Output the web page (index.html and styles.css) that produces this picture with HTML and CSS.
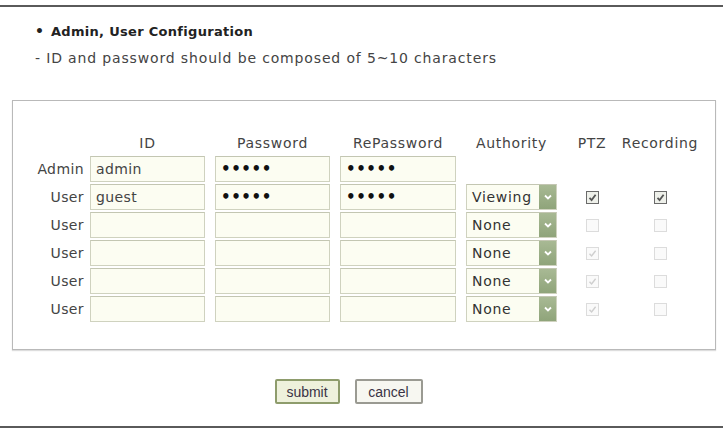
FILE: index.html
```html
<!DOCTYPE html>
<html>
<head>
<meta charset="utf-8">
<link rel="stylesheet" href="styles.css">
</head>
<body>
<div class="page">
  <div class="intro">
    <div class="title"><span class="bullet">•</span>Admin, User Configuration</div>
    <div class="desc">- ID and password should be composed of 5~10 characters</div>
  </div>
  <div class="box">
    <div class="grid">
      <div class="hd"></div>
      <div class="hd">ID</div>
      <div class="hd">Password</div>
      <div class="hd">RePassword</div>
      <div class="hd">Authority</div>
      <div class="hd">PTZ</div>
      <div class="hd">Recording</div>

      <div class="lbl">Admin</div>
      <input class="field" type="text" value="admin">
      <input class="field pw" type="password" value="admin">
      <input class="field pw" type="password" value="admin">
      <div></div><div></div><div></div>

      <div class="lbl">User</div>
      <input class="field" type="text" value="guest">
      <input class="field pw" type="password" value="guest">
      <input class="field pw" type="password" value="guest">
      <div class="sel"><span class="sel-text">Viewing</span><span class="sel-btn"><svg viewBox="0 0 10 10" width="10" height="10"><path d="M2 3.5 L5 6.5 L8 3.5" fill="none" stroke="#fff" stroke-width="1.8"/></svg></span></div>
      <div class="cbcell"><span class="cb on"><svg viewBox="0 0 11 11" width="11" height="11"><path d="M2.5 5.8 L4.6 8 L8.6 2.8" fill="none" stroke="#555" stroke-width="1.8"/></svg></span></div>
      <div class="cbcell"><span class="cb on"><svg viewBox="0 0 11 11" width="11" height="11"><path d="M2.5 5.8 L4.6 8 L8.6 2.8" fill="none" stroke="#555" stroke-width="1.8"/></svg></span></div>

      <div class="lbl">User</div>
      <input class="field" type="text" value="">
      <input class="field" type="password" value="">
      <input class="field" type="password" value="">
      <div class="sel"><span class="sel-text">None</span><span class="sel-btn"><svg viewBox="0 0 10 10" width="10" height="10"><path d="M2 3.5 L5 6.5 L8 3.5" fill="none" stroke="#fff" stroke-width="1.8"/></svg></span></div>
      <div class="cbcell"><span class="cb off"></span></div>
      <div class="cbcell"><span class="cb off"></span></div>

      <div class="lbl">User</div>
      <input class="field" type="text" value="">
      <input class="field" type="password" value="">
      <input class="field" type="password" value="">
      <div class="sel"><span class="sel-text">None</span><span class="sel-btn"><svg viewBox="0 0 10 10" width="10" height="10"><path d="M2 3.5 L5 6.5 L8 3.5" fill="none" stroke="#fff" stroke-width="1.8"/></svg></span></div>
      <div class="cbcell"><span class="cb off"><svg viewBox="0 0 11 11" width="11" height="11"><path d="M2.5 5.8 L4.6 8 L8.6 2.8" fill="none" stroke="#cfcfcf" stroke-width="1.4"/></svg></span></div>
      <div class="cbcell"><span class="cb off"></span></div>

      <div class="lbl">User</div>
      <input class="field" type="text" value="">
      <input class="field" type="password" value="">
      <input class="field" type="password" value="">
      <div class="sel"><span class="sel-text">None</span><span class="sel-btn"><svg viewBox="0 0 10 10" width="10" height="10"><path d="M2 3.5 L5 6.5 L8 3.5" fill="none" stroke="#fff" stroke-width="1.8"/></svg></span></div>
      <div class="cbcell"><span class="cb off"><svg viewBox="0 0 11 11" width="11" height="11"><path d="M2.5 5.8 L4.6 8 L8.6 2.8" fill="none" stroke="#cfcfcf" stroke-width="1.4"/></svg></span></div>
      <div class="cbcell"><span class="cb off"></span></div>

      <div class="lbl">User</div>
      <input class="field" type="text" value="">
      <input class="field" type="password" value="">
      <input class="field" type="password" value="">
      <div class="sel"><span class="sel-text">None</span><span class="sel-btn"><svg viewBox="0 0 10 10" width="10" height="10"><path d="M2 3.5 L5 6.5 L8 3.5" fill="none" stroke="#fff" stroke-width="1.8"/></svg></span></div>
      <div class="cbcell"><span class="cb off"><svg viewBox="0 0 11 11" width="11" height="11"><path d="M2.5 5.8 L4.6 8 L8.6 2.8" fill="none" stroke="#cfcfcf" stroke-width="1.4"/></svg></span></div>
      <div class="cbcell"><span class="cb off"></span></div>
    </div>
  </div>
  <div class="actions">
    <button class="btn submit" type="button">submit</button>
    <button class="btn cancel" type="button">cancel</button>
  </div>
</div>
</body>
</html>
```

FILE: styles.css
```css
html, body {
  margin: 0;
  padding: 0;
  background: #fff;
}
body {
  font-family: "DejaVu Sans", Verdana, sans-serif;
  color: #444;
}
.page {
  box-sizing: border-box;
  margin-top: 5px;
  height: 423px;
  border-top: 2px solid #5a5a5a;
  border-bottom: 2px solid #5a5a5a;
  display: flex;
  flex-direction: column;
}
.intro {
  padding: 15px 0 0 35px;
}
.title {
  font-size: 13px;
  font-weight: bold;
  color: #222;
  line-height: 18px;
  letter-spacing: 0.3px;
}
.bullet {
  display: inline-block;
  width: 16px;
  font-size: 14px;
}
.desc {
  margin-top: 8px;
  font-size: 14px;
  line-height: 18px;
  color: #444;
  letter-spacing: 0.85px;
}
.box {
  margin: 33px 7px 0 12px;
  border: 1px solid #b9b9b9;
  box-shadow: 0 1px 1px #ddd;
  padding: 32px 0 27px 0;
}
.grid {
  display: grid;
  grid-template-columns: 67px 115px 115px 116px 91px 50px 66px;
  grid-template-rows: 21px repeat(6, 26px);
  column-gap: 10px;
  row-gap: 2px;
  font-size: 14px;
  letter-spacing: 0.7px;
}
.hd {
  justify-self: center;
  text-align: center;
  line-height: 21px;
  color: #444;
  white-space: nowrap;
}
.lbl {
  text-align: right;
  line-height: 26px;
  margin-right: -4px;
  color: #444;
  letter-spacing: 0.4px;
}
.field {
  box-sizing: border-box;
  width: 100%;
  height: 26px;
  margin: 0;
  padding: 0 5px;
  border: 1px solid #cfd2bf;
  border-top-color: #c3c6b2;
  background: #fcfdf2;
  font-family: "DejaVu Sans", Verdana, sans-serif;
  font-size: 14px;
  letter-spacing: 0.4px;
  color: #444;
  outline: none;
}
.pw {
  font-size: 15px;
  letter-spacing: 0.6px;
  font-weight: bold;
  color: #111;
}
.sel {
  box-sizing: border-box;
  height: 26px;
  display: flex;
  border: 1px solid #cfd2bf;
  border-top-color: #c3c6b2;
  background: #fcfdf2;
}
.sel-text {
  flex: 1;
  padding-left: 5px;
  line-height: 24px;
  color: #333;
}
.sel-btn {
  width: 17px;
  background: linear-gradient(#a8b994, #8fa47a);
  display: flex;
  align-items: center;
  justify-content: center;
}
.cbcell {
  display: flex;
  align-items: center;
  justify-content: center;
}
.cb {
  box-sizing: border-box;
  width: 13px;
  height: 13px;
  display: flex;
  align-items: center;
  justify-content: center;
  background: #f4f5f0;
}
.cb.on {
  border: 1px solid #6a6a6a;
  background: #eef0ea;
}
.cb.off {
  border: 1px solid #dcdcdc;
  background: #fafafa;
}
.actions {
  flex: 1;
  display: flex;
  justify-content: center;
  align-items: flex-start;
  gap: 15px;
  padding: 29px 26px 0 0;
}
.btn {
  height: 25px;
  margin: 0;
  padding: 0 6px;
  font-family: "Liberation Sans", Arial, sans-serif;
  font-size: 14px;
  color: #3a3345;
  border-radius: 2px;
  cursor: pointer;
}
.submit {
  width: 65px;
  border: 2px solid #8e9c6c;
  background: #eef1dc;
}
.cancel {
  width: 68px;
  border: 2px solid #9a9a92;
  background: #f7f7f1;
}
```
